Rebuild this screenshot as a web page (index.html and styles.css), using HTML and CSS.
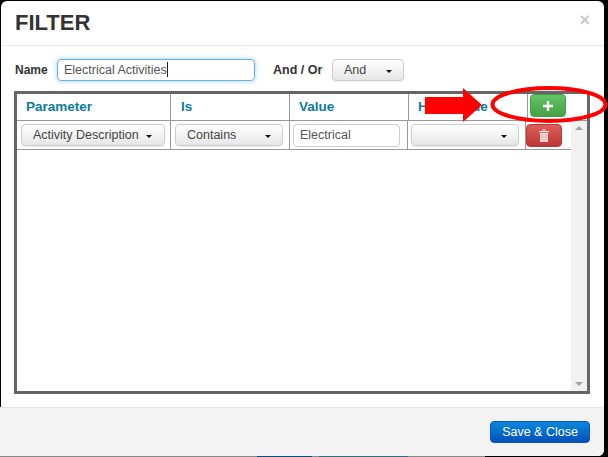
FILE: index.html
```html
<!DOCTYPE html>
<html lang="en">

<head>
    <meta charset="UTF-8">
    <meta name="viewport" content="width=device-width, initial-scale=1.0">
    <title>Filter</title>
    <link rel="stylesheet" href="styles.css">
</head>

<body>
    <div class="modal">
        <!-- Header -->
        <header class="modal-header">
            <h1>FILTER</h1>
            <span class="close">×</span>
        </header>

        <!-- Body -->
        <main class="modal-body">
            <div class="name-row">
                <label class="name-label">Name</label>
                <div class="name-input">Electrical Activities<span class="caret-line"></span></div>
                <label class="andor-label">And / Or</label>
                <button class="btn btn-andor">And <span class="caret"></span></button>
            </div>

            <div class="grid-box">
                <div class="grid-head">
                    <div class="th">Parameter</div>
                    <div class="th th-is">Is</div>
                    <div class="th">Value</div>
                    <div class="th">Hard Value</div>
                    <div class="th th-action">
                        <button class="btn-icon btn-add">
                            <svg width="10" height="10" viewBox="0 0 10 10"><path d="M3.800 0h2.400v3.800H10v2.400H6.200V10H3.800V6.200H0V3.800h3.800z" fill="#fff"/></svg>
                        </button>
                    </div>
                </div>
                <div class="grid-main">
                    <div class="grid-rows">
                        <div class="grid-row">
                            <div class="td"><button class="btn btn-param">Activity Description <span class="caret"></span></button></div>
                            <div class="td"><button class="btn btn-is">Contains <span class="caret"></span></button></div>
                            <div class="td td-value"><div class="value-input">Electrical</div></div>
                            <div class="td td-hard"><button class="btn btn-hard"><span class="caret"></span></button></div>
                            <div class="td td-action">
                                <button class="btn-icon btn-delete">
                                    <svg width="10" height="13" viewBox="0 0 10 13"><path d="M3 1.500V.5h4v1M0 2h10v1.300H0zM1 4h8v9H1z" fill="#f7dedd"/><path d="M3 5v7M5 5v7M7 5v7" stroke="#eab0ae"/></svg>
                                </button>
                            </div>
                        </div>
                    </div>
                    <div class="scrollbar">
                        <span class="arrow-up"></span>
                        <span class="arrow-down"></span>
                    </div>
                </div>
            </div>
        </main>

        <!-- Footer -->
        <footer class="modal-footer">
            <button class="btn-save">Save &amp; Close</button>
        </footer>
    </div>

    <!-- Bit of the page behind the dialog, along the bottom edge -->
    <div class="page-strip">
        <span class="strip-grey"></span>
        <span class="strip-blue"></span>
        <span class="strip-gap"></span>
        <span class="strip-teal"></span>
        <span class="strip-end"></span>
    </div>

    <!-- Red annotation drawn over the screenshot -->
    <svg class="annotation" width="608" height="457" viewBox="0 0 608 457">
        <path d="M425 97h38V88l19 17-19 17v-8H425z" fill="#f00"/>
        <ellipse cx="549" cy="104.500" rx="56.500" ry="16.500" fill="none" stroke="#f00" stroke-width="4"/>
    </svg>
</body>

</html>
```

FILE: styles.css
```css
/* Filter dialog */
* {
    box-sizing: border-box;
}

body {
    margin: 0;
    height: 457px;
    overflow: hidden;
    background: linear-gradient(#000 407px, #f3f3f3 407px) left / 6px 100% no-repeat, #000;
    font-family: "Liberation Sans", Arial, sans-serif;
    font-size: 12px;
    color: #333;
    position: relative;
}

.modal {
    width: 603px;
    height: 455px;
    margin: 1px 0 0 1px;
    background: #fff;
    border-radius: 6px;
    display: flex;
    flex-direction: column;
    overflow: hidden;
}

.modal-header {
    height: 45px;
    flex-shrink: 0;
    display: flex;
    justify-content: space-between;
    align-items: center;
    padding: 0 14px;
    border-bottom: 1px solid #e5e5e5;
}

.modal-header h1 {
    margin: 0;
    font-size: 22px;
    font-weight: bold;
    color: #333;
}

.close {
    font-size: 18px;
    font-weight: bold;
    color: #c9c9c9;
    margin: 0 0 6px 0;
}

.modal-body {
    flex: 1;
    padding: 13px 13px 13px 13px;
    display: flex;
    flex-direction: column;
}

.name-row {
    display: flex;
    align-items: center;
    height: 22px;
    margin-bottom: 10px;
}

.name-label,
.andor-label {
    font-weight: bold;
    font-size: 12px;
}

.name-label {
    width: 43px;
    padding-left: 1px;
}

.name-input {
    width: 198px;
    height: 22px;
    padding: 0 6px;
    line-height: 20px;
    border: 1px solid #66afe9;
    border-radius: 4px;
    box-shadow: 0 0 5px rgba(102, 175, 233, 0.6);
    color: #555;
    font-size: 12.5px;
}

.caret-line {
    display: inline-block;
    width: 1px;
    height: 15px;
    background: #222;
    vertical-align: -3px;
}

.andor-label {
    margin-left: 18px;
    width: 59px;
    font-size: 12.5px;
}

.btn {
    border: 1px solid #ccc;
    border-radius: 4px;
    background: linear-gradient(#fff, #e6e6e6);
    box-shadow: 0 1px 1px rgba(0, 0, 0, 0.08);
    color: #444;
    font-family: inherit;
    font-size: 12.5px;
    height: 22px;
    padding: 0;
    display: flex;
    align-items: center;
    justify-content: space-between;
}

.btn-andor {
    width: 72px;
    padding: 0 11px;
}

.caret {
    width: 0;
    height: 0;
    border-left: 3.500px solid transparent;
    border-right: 3.500px solid transparent;
    border-top: 3.500px solid #111;
    margin-top: 3px;
}

.grid-box {
    flex: 1;
    border: 3px solid #666;
    display: flex;
    flex-direction: column;
    width: 576px;
}

.grid-head {
    display: grid;
    grid-template-columns: 154px 119px 119px 119px 59px;
    height: 27px;
    border-bottom: 1px solid #999;
    flex-shrink: 0;
}

.th {
    color: #0b7b9c;
    font-size: 13.5px;
    font-weight: bold;
    padding: 5px 0 0 9px;
    border-right: 1px solid #999;
}

.th-is {
    padding-left: 10px;
}

.th-action {
    border-right: 0;
    padding: 0 0 0 2px;
}

.grid-main {
    flex: 1;
    display: flex;
}

.grid-rows {
    flex: 1;
}

.grid-row {
    display: grid;
    grid-template-columns: 154px 119px 118px 118px 45px;
    height: 29px;
    border-bottom: 1px solid #999;
}

.td {
    border-right: 1px solid #999;
    padding: 3px 0 0 4px;
}

.td-value,
.td-hard {
    padding-left: 3px;
}

.td-action {
    border-right: 0;
    padding-left: 0;
}

.btn-param {
    width: 144px;
    padding: 0 12px 0 11px;
}

.btn-is {
    width: 108px;
    padding: 0 11px;
}

.btn-hard {
    width: 108px;
    padding: 0 11px;
    justify-content: flex-end;
}

.value-input {
    width: 107px;
    height: 23px;
    border: 1px solid #ccc;
    border-radius: 4px;
    padding: 0 6px;
    line-height: 21px;
    font-size: 12.5px;
    color: #555;
}

.btn-icon {
    width: 36px;
    height: 23px;
    border-radius: 4px;
    padding: 0;
    display: flex;
    align-items: center;
    justify-content: center;
}

.btn-add {
    border: 1px solid #4a9a4a;
    background: linear-gradient(#62c462, #44a244);
}

.btn-delete {
    border: 1px solid #b93a37;
    background: linear-gradient(#dc5f5b, #bd3633);
}

.scrollbar {
    width: 17px;
    background: #f1f1f1;
    display: flex;
    flex-direction: column;
    justify-content: space-between;
    align-items: center;
    padding: 5px 0;
}

.arrow-up,
.arrow-down {
    width: 0;
    height: 0;
    border-left: 4px solid transparent;
    border-right: 4px solid transparent;
}

.arrow-up {
    border-bottom: 4px solid #a3a3a3;
}

.arrow-down {
    border-top: 4px solid #a3a3a3;
}

.modal-footer {
    height: 49px;
    flex-shrink: 0;
    background: #f3f3f3;
    border-top: 1px solid #e5e5e5;
    display: flex;
    justify-content: flex-end;
    align-items: flex-start;
    padding: 13px 14px 0 0;
}

.btn-save {
    width: 100px;
    height: 22px;
    border: 1px solid #0a55b5;
    border-radius: 4px;
    background: linear-gradient(#0a88dd, #0450b8);
    color: #fff;
    font-family: inherit;
    font-size: 12.5px;
    padding: 0;
}

.page-strip {
    display: flex;
    height: 1px;
}

.strip-grey {
    width: 257px;
    background: #888;
}

.strip-blue {
    width: 55px;
    background: #0a4f78;
}

.strip-gap {
    width: 7px;
    background: #888;
}

.strip-teal {
    width: 89px;
    background: #2f6f7a;
}

.strip-end {
    width: 77px;
    background: #888;
}

.annotation {
    position: absolute;
    top: 0;
    left: 0;
}
```
